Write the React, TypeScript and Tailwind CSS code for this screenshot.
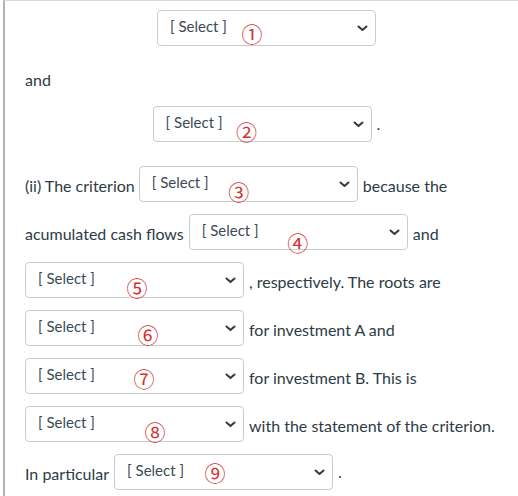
const marks: Record<number, string> = {
  1: 'left-[84px] top-[12px]',
  2: 'left-[83px] top-[14px]',
  3: 'left-[89px] top-[14px]',
  4: 'left-[98px] top-[17px]',
  5: 'left-[101px] top-[14px]',
  6: 'left-[112px] top-[13px]',
  7: 'left-[108px] top-[9px]',
  8: 'left-[119px] top-[14px]',
  9: 'left-[90px] top-[7px]',
};

const glyphs = ['', '①', '②', '③', '④', '⑤', '⑥', '⑦', '⑧', '⑨'];

const Dropdown = ({ n }: { n: number }) => (
  <div className="relative h-[36px] w-[219px] shrink-0 rounded-[4px] border border-[#c7cdd1] bg-white">
    <span className="absolute left-[12px] top-0 flex h-[34px] items-center pb-[3px] text-[15px] text-[#3d4a53]">
      [ Select ]
    </span>
    <span
      className={`absolute flex h-[20px] w-[20px] items-center justify-center text-[21px] leading-none text-[#d2312e] ${marks[n]}`}
      style={{ fontFamily: '"Noto Sans CJK SC", "DejaVu Sans", sans-serif' }}
    >
      {glyphs[n]}
    </span>
    <svg
      className="absolute right-[7px] top-[14px]"
      width="11"
      height="7"
      viewBox="0 0 11 7"
      fill="none"
    >
      <path d="M1.5 1.5 L5.5 5 L9.5 1.5" stroke="#2d3b45" strokeWidth="2" strokeLinecap="round" strokeLinejoin="round" />
    </svg>
  </div>
);

export default function App() {
  return (
    <div
      className="min-h-[496px] w-[518px] overflow-hidden bg-white text-[16px] text-[#2d3b45]"
      style={{ fontFamily: 'Lato, "Open Sans", sans-serif' }}
    >
      <div className="ml-[3px] min-h-[496px] border-l-2 border-t border-l-[#b4b4b4] border-t-[#dadada] pl-[20px] pr-[10px] pt-[9px]">
        <div className="flex justify-center">
          <Dropdown n={1} />
        </div>

        <div className="h-[60px] pt-[24px] leading-[20px]">and</div>

        <div className="flex items-end justify-center gap-[5px]">
          <Dropdown n={2} />
          <span className="pb-[6px]">.</span>
        </div>

        <div className="mt-[24px] flex flex-col gap-[12px]">
          <div className="flex items-center gap-[4px]">
            <span className="pt-[4px]">(ii) The criterion</span>
            <Dropdown n={3} />
            <span className="pl-[1px] pt-[4px]">because the</span>
          </div>
          <div className="flex items-center gap-[5px]">
            <span className="pt-[4px]">acumulated cash flows</span>
            <Dropdown n={4} />
            <span className="pt-[4px]">and</span>
          </div>
          <div className="flex items-center gap-[5px]">
            <Dropdown n={5} />
            <span className="pt-[4px]">, respectively. The roots are</span>
          </div>
          <div className="flex items-center gap-[5px]">
            <Dropdown n={6} />
            <span className="pt-[4px]">for investment A and</span>
          </div>
          <div className="flex items-center gap-[5px]">
            <Dropdown n={7} />
            <span className="pt-[4px]">for investment B. This is</span>
          </div>
          <div className="flex items-center gap-[5px]">
            <Dropdown n={8} />
            <span className="pt-[4px]">with the statement of the criterion.</span>
          </div>
          <div className="flex items-center gap-[5px]">
            <span className="pt-[4px]">In particular</span>
            <Dropdown n={9} />
            <span className="self-end pb-[6px]">.</span>
          </div>
        </div>
      </div>
    </div>
  );
}
